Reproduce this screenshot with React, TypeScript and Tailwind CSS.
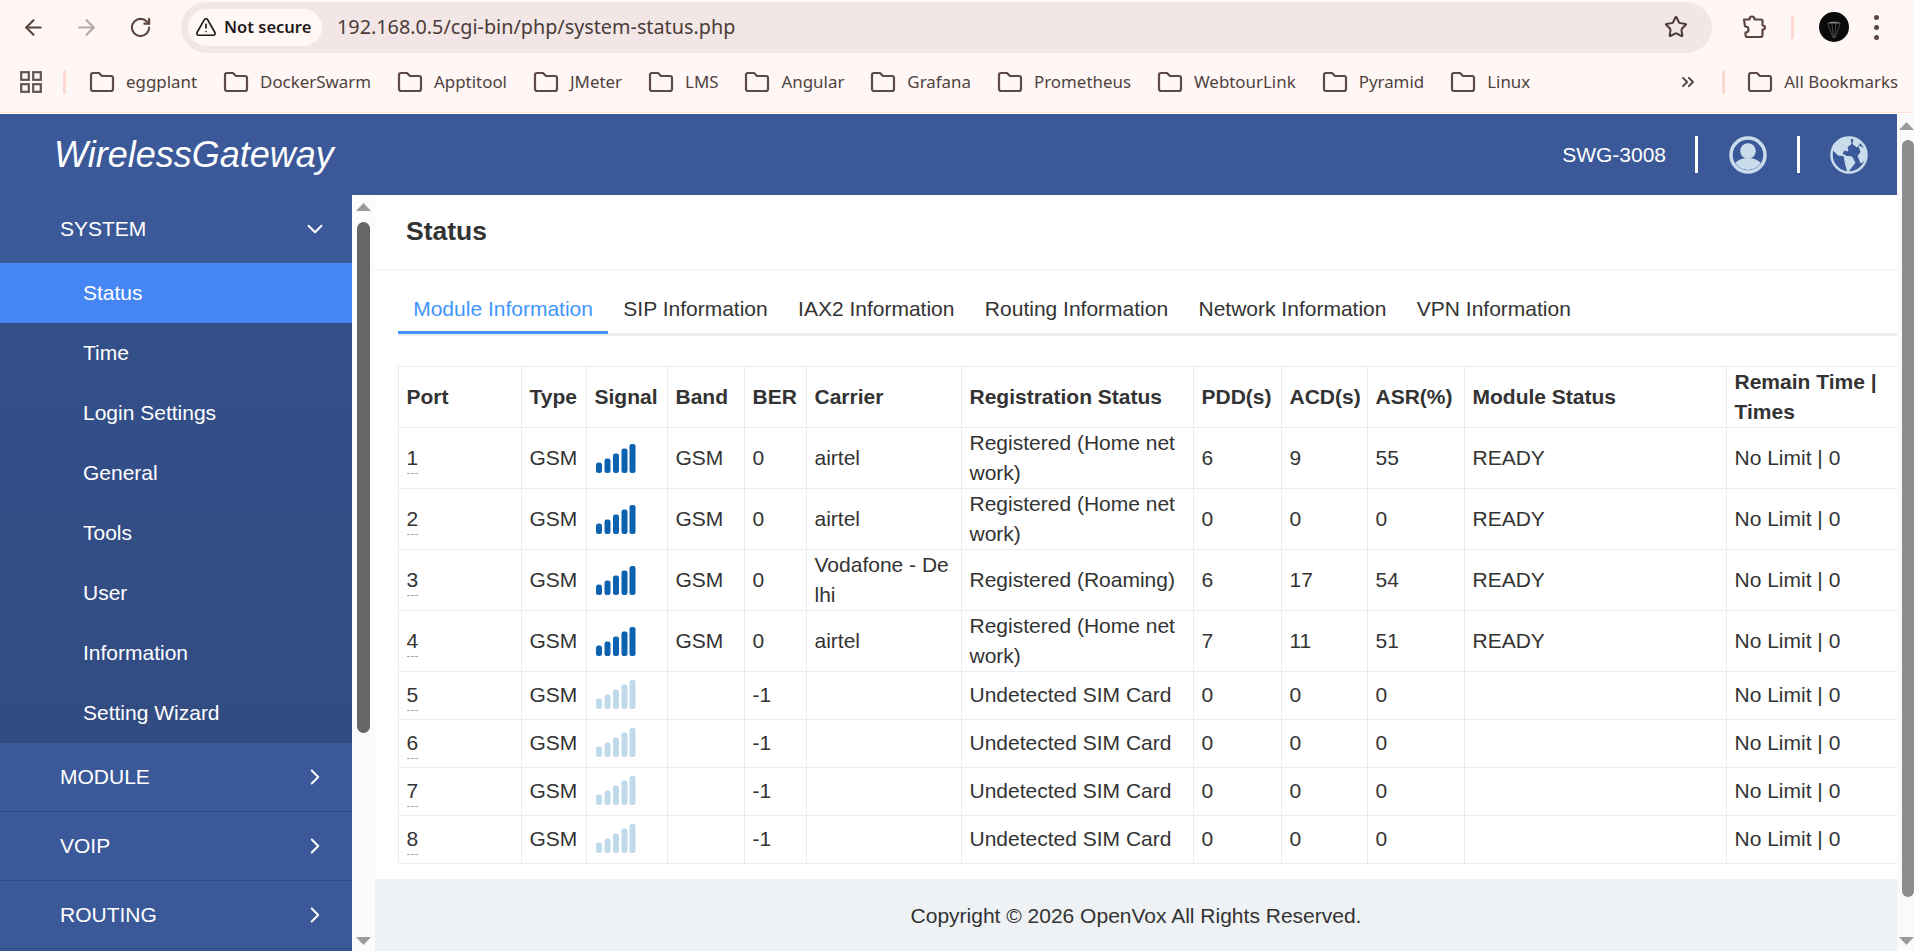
import { ArrowLeft, ArrowRight, RotateCw, Star, ChevronDown, ChevronRight, ChevronsRight, TriangleAlert } from 'lucide-react';

const BOOKMARKS = ['eggplant', 'DockerSwarm', 'Apptitool', 'JMeter', 'LMS', 'Angular', 'Grafana', 'Prometheus', 'WebtourLink', 'Pyramid', 'Linux'];
const SUB_MENU = ['Status', 'Time', 'Login Settings', 'General', 'Tools', 'User', 'Information', 'Setting Wizard'];
const TABS = ['Module Information', 'SIP Information', 'IAX2 Information', 'Routing Information', 'Network Information', 'VPN Information'];

const HOME = 'Registered (Home net work)';
const ROWS = [
  { port: 1, band: 'GSM', ber: '0', carrier: 'airtel', reg: HOME, pdd: 6, acd: 9, asr: 55, status: 'READY' },
  { port: 2, band: 'GSM', ber: '0', carrier: 'airtel', reg: HOME, pdd: 0, acd: 0, asr: 0, status: 'READY' },
  { port: 3, band: 'GSM', ber: '0', carrier: 'Vodafone - Delhi', reg: 'Registered (Roaming)', pdd: 6, acd: 17, asr: 54, status: 'READY' },
  { port: 4, band: 'GSM', ber: '0', carrier: 'airtel', reg: HOME, pdd: 7, acd: 11, asr: 51, status: 'READY' },
  { port: 5, band: '', ber: '-1', carrier: '', reg: 'Undetected SIM Card', pdd: 0, acd: 0, asr: 0, status: '' },
  { port: 6, band: '', ber: '-1', carrier: '', reg: 'Undetected SIM Card', pdd: 0, acd: 0, asr: 0, status: '' },
  { port: 7, band: '', ber: '-1', carrier: '', reg: 'Undetected SIM Card', pdd: 0, acd: 0, asr: 0, status: '' },
  { port: 8, band: '', ber: '-1', carrier: '', reg: 'Undetected SIM Card', pdd: 0, acd: 0, asr: 0, status: '' }
];

const FolderIcon = () => (
  <svg width="26" height="22" viewBox="0 0 26 22" fill="none" stroke="#5b4a45" strokeWidth="2.2" strokeLinejoin="round" className="shrink-0">
    <path d="M2 4a2 2 0 0 1 2-2h6l3 3h9a2 2 0 0 1 2 2v11a2 2 0 0 1-2 2H4a2 2 0 0 1-2-2z" />
  </svg>
);

const AppsIcon = () => (
  <svg width="22" height="22" viewBox="0 0 22 22" fill="none" stroke="#5f5552" strokeWidth="2.2">
    <rect x="1.2" y="1.2" width="7.6" height="7.6" />
    <rect x="13.2" y="1.2" width="7.6" height="7.6" />
    <rect x="1.2" y="13.2" width="7.6" height="7.6" />
    <rect x="13.2" y="13.2" width="7.6" height="7.6" />
  </svg>
);

// chrome's extensions button
const ExtensionIcon = () => (
  <svg width="26" height="26" viewBox="0 0 26 26" fill="none" stroke="#5b4640" strokeWidth="2.200" strokeLinejoin="round">
    <path d="M3 5.500h5.500c0-1.500 1-3 2.500-3s2.500 1.500 2.500 3H20a1.500 1.500 0 0 1 1.500 1.500v4.500c1.800 0 2.500 1 2.500 2s-.7 2-2.500 2V21a2 2 0 0 1-2 2h-13a2 2 0 0 1-2-2v-2.500c1.800 0 3-1.200 3-3s-1.200-3-3-3l-.5-.2z" />
  </svg>
);

const Avatar = () => (
  <svg width="30" height="30" viewBox="0 0 30 30">
    <circle cx="15" cy="15" r="15" fill="#0a0a0a" />
    <path d="M8 11.500c2-2.500 12-2.500 14 0z" fill="#8a8a8a" />
    <path d="M9 12l5 14M13 12l1.500 14M17 12l-1.500 14M21 12l-5 14" stroke="#555" strokeWidth="0.8" fill="none" />
  </svg>
);

const Signal = ({ on }: { on: boolean }) => (
  <svg width="41" height="29" viewBox="0 0 41 29" className="block ml-[1px]" fill={on ? '#0a62b0' : '#bfdaea'}>
    <rect x="0" y="18.5" width="6" height="10.5" rx="2.5" />
    <rect x="8.500" y="14.5" width="6" height="14.5" rx="2.2" />
    <rect x="17" y="9.5" width="6" height="19.5" rx="2.2" />
    <rect x="25.500" y="4.5" width="6" height="24.5" rx="2.2" />
    <rect x="33.500" y="0" width="6" height="29" rx="2.2" />
  </svg>
);

const UserIcon = () => (
  <svg width="38" height="38" viewBox="0 0 38 38">
    <defs>
      <clipPath id="user-clip"><circle cx="19" cy="19" r="15" /></clipPath>
    </defs>
    <circle cx="19" cy="19" r="17" fill="none" stroke="#c8dcec" strokeWidth="3.500" />
    <g fill="#c8dcec" clipPath="url(#user-clip)">
      <circle cx="19" cy="15" r="7.800" />
      <path d="M3 36c0-9 7-14 16-14s16 5 16 14z" />
    </g>
  </svg>
);

const GlobeIcon = () => (
  <svg width="38" height="38" viewBox="0 0 38 38">
    <circle cx="19" cy="19" r="17.500" fill="#3b5998" stroke="#c8dcec" strokeWidth="2.500" />
    <g fill="#c8dcec" stroke="#c8dcec" strokeWidth="1" strokeLinejoin="round">
      <path d="M13 3l7-1 1 6-4 3 1 4-4-1-2 4 4 2-8-1-5-5 1-6z" />
      <path d="M14 20l8 1 3 6-5 6-2 3-2-6z" />
      <path d="M29 10l6 3 1 10-5 4-3-7 3-4z" />
      <path d="M24 3l7 3-4 5-4-3z" />
    </g>
  </svg>
);

const ArrowUp = () => (
  <svg width="15" height="8" viewBox="0 0 15 8" className="block shrink-0" fill="#9a9a9a"><path d="M7.500 0 15 8H0z" /></svg>
);

const ArrowDown = () => (
  <svg width="15" height="8" viewBox="0 0 15 8" className="block shrink-0" fill="#9a9a9a"><path d="M0 0h15L7.500 8z" /></svg>
);

const SideHead = ({ label, tall, open }: { label: string; tall?: boolean; open?: boolean }) => (
  <div className={`flex items-center justify-between pl-[60px] pr-[24px] text-[21px] text-white ${open ? 'h-[68px]' : 'border-b border-[#304b80]'} ${tall ? 'h-[69px]' : open ? '' : 'h-[68px]'}`}>
    <span>{label}</span>
    {open ? <ChevronDown className="w-[26px] h-[26px]" strokeWidth={1.8} /> : <ChevronRight className="w-[26px] h-[26px]" strokeWidth={1.8} />}
  </div>
);

export default function App() {
  const thead = 'border border-[#e9ecf3] px-[7.500px] align-middle text-left font-bold leading-[30px]';
  const td = 'border border-[#e9ecf3] px-[7.500px] align-middle leading-[30px] break-all';

  return (
    <div className="w-[1914px] h-[951px] overflow-hidden flex flex-col bg-white text-[#333] font-['Liberation_Sans',Arial,sans-serif]">
      {/* browser toolbar */}
      <div className="h-[54px] shrink-0 bg-[#fff7f5] flex items-center text-[#5b4640]">
        <div className="w-[181px] shrink-0 flex items-center pl-[21px] gap-[28px]">
          <ArrowLeft className="w-[25px] h-[25px]" strokeWidth={2} />
          <ArrowRight className="w-[25px] h-[25px] text-[#b5a9a6]" strokeWidth={2} />
          <RotateCw className="w-[23px] h-[23px] ml-[2px]" strokeWidth={2.2} />
        </div>
        <div className="w-[1531px] h-[51px] rounded-full bg-[#f2e7e6] flex items-center pl-[7px] pr-[24px]">
          <div className="h-[37px] w-[134px] rounded-full bg-[#fff8f6] flex items-center pl-[7px] gap-[7px] text-[#1f1a1a] font-['Noto_Sans',sans-serif] font-semibold text-[16.500px]">
            <TriangleAlert className="w-[22px] h-[22px] shrink-0" strokeWidth={1.8} />
            <span className="whitespace-nowrap">Not secure</span>
          </div>
          <span className="ml-[15px] text-[19.800px] text-[#4b3b37] font-['Noto_Sans',sans-serif]">192.168.0.5/cgi-bin/php/system-status.php</span>
          <Star className="ml-auto w-[24px] h-[24px] text-[#4b3b37]" strokeWidth={2} />
        </div>
        <div className="ml-[29px]"><ExtensionIcon /></div>
        <div className="ml-[24px] w-[3px] h-[24px] rounded-full bg-[#fbd9d0]" />
        <div className="ml-[25px]"><Avatar /></div>
        <div className="ml-[25px] flex flex-col gap-[5px]">
          <div className="w-[5px] h-[5px] rounded-full bg-[#5b4640]" />
          <div className="w-[5px] h-[5px] rounded-full bg-[#5b4640]" />
          <div className="w-[5px] h-[5px] rounded-full bg-[#5b4640]" />
        </div>
      </div>

      {/* bookmarks bar */}
      <div className="h-[59px] shrink-0 bg-[#fff7f5] border-b border-[#fbe3da] flex items-center pl-[20px] pb-[2px] text-[#4f423e] text-[16.900px] font-['Noto_Sans',sans-serif]">
        <AppsIcon />
        <div className="ml-[21px] w-[3px] h-[24px] rounded-full bg-[#fbd9d0]" />
        <div className="ml-[23px] flex items-center gap-[26px]">
          {BOOKMARKS.map((name) => (
            <div key={name} className="flex items-center gap-[11px] whitespace-nowrap">
              <FolderIcon />
              <span>{name}</span>
            </div>
          ))}
        </div>
        <ChevronsRight className="ml-auto w-[20px] h-[20px]" strokeWidth={2.2} />
        <div className="ml-[24px] w-[3px] h-[24px] rounded-full bg-[#fbd9d0]" />
        <div className="ml-[22px] mr-[16px] flex items-center gap-[11px] whitespace-nowrap">
          <FolderIcon />
          <span>All Bookmarks</span>
        </div>
      </div>
      <div className="h-px shrink-0 bg-white" />

      <div className="flex-1 min-h-0 flex">
        <div className="flex-1 min-w-0 flex flex-col">
          {/* header */}
          <div className="h-[81px] shrink-0 bg-[#3b5998] flex items-center pl-[54px] text-white">
            <span className="italic text-[36px]">WirelessGateway</span>
            <span className="ml-auto text-[21px]">SWG-3008</span>
            <div className="ml-[29px] w-[3px] h-[37px] bg-white" />
            <div className="ml-[31px]"><UserIcon /></div>
            <div className="ml-[30px] w-[3px] h-[37px] bg-white" />
            <div className="ml-[30px] mr-[29px]"><GlobeIcon /></div>
          </div>

          <div className="flex-1 min-h-0 flex">
            {/* sidebar */}
            <div className="w-[352px] shrink-0 bg-[#3b5998] overflow-hidden">
              <SideHead label="SYSTEM" open />
              <div className="bg-gradient-to-b from-[#34508a] to-[#324c82]">
                {SUB_MENU.map((item) => (
                  <div key={item} className={`h-[60px] flex items-center pl-[83px] text-[21px] text-white ${item === 'Status' ? 'bg-[#4585f4]' : ''}`}>
                    {item}
                  </div>
                ))}
              </div>
              <SideHead label="MODULE" tall />
              <SideHead label="VOIP" tall />
              <SideHead label="ROUTING" />
            </div>

            {/* inner scrollbar */}
            <div className="w-[23px] shrink-0 bg-[#fbfbfb] flex flex-col items-center pt-[8px] pb-[6px]">
              <ArrowUp />
              <div className="mt-[11px] w-[13px] h-[511px] rounded-full bg-[#666]" />
              <div className="mt-auto"><ArrowDown /></div>
            </div>

            {/* content */}
            <div className="flex-1 min-w-0 flex flex-col">
              <div className="h-[75px] shrink-0 border-b border-[#eef0f3] flex items-center pl-[31px] pb-[1px] text-[26.500px] font-bold text-[#333]">Status</div>

              <div className="ml-[23px] mt-[13px] h-[53px] shrink-0 border-b-[3px] border-[#eeeeee] flex items-start text-[21px] leading-[52px]">
                {TABS.map((tab, i) => (
                  <div
                    key={tab}
                    className={`h-[51px] px-[15.200px] whitespace-nowrap ${i === 0 ? 'border-b-[3px] border-[#4096ff] text-[#4096ff] rounded-b-[1px]' : 'text-[#333]'}`}
                  >
                    {tab}
                  </div>
                ))}
              </div>

              <div className="ml-[23px] mt-[30px] shrink-0">
                <table className="w-full table-fixed border-collapse text-[21px] text-[#333]">
                  <thead>
                    <tr className="h-[61px]">
                      <th className={`${thead} w-[123px]`}>Port</th>
                      <th className={`${thead} w-[65px]`}>Type</th>
                      <th className={`${thead} w-[81px]`}>Signal</th>
                      <th className={`${thead} w-[77px]`}>Band</th>
                      <th className={`${thead} w-[62px]`}>BER</th>
                      <th className={`${thead} w-[155px]`}>Carrier</th>
                      <th className={`${thead} w-[232px]`}>Registration Status</th>
                      <th className={`${thead} w-[88px]`}>PDD(s)</th>
                      <th className={`${thead} w-[86px]`}>ACD(s)</th>
                      <th className={`${thead} w-[97px]`}>ASR(%)</th>
                      <th className={`${thead} w-[262px]`}>Module Status</th>
                      <th className={`${thead} w-[171px]`}>Remain Time | Times</th>
                    </tr>
                  </thead>
                  <tbody>
                    {ROWS.map((row) => {
                      const cell = row.port < 5 ? td : `${td} pb-[2px]`;
                      return (
                        <tr key={row.port} className={row.port < 5 ? 'h-[61px]' : 'h-[48px]'}>
                          <td className={cell}>
                            <span className="inline-block border-b border-dashed border-[#aaa] leading-[31px]">{row.port}</span>
                          </td>
                          <td className={cell}>GSM</td>
                          <td className={cell}><Signal on={row.port < 5} /></td>
                          <td className={cell}>{row.band}</td>
                          <td className={cell}>{row.ber}</td>
                          <td className={`${cell} pr-[12px]`}>{row.carrier}</td>
                          <td className={cell}>{row.reg}</td>
                          <td className={cell}>{row.pdd}</td>
                          <td className={cell}>{row.acd}</td>
                          <td className={cell}>{row.asr}</td>
                          <td className={cell}>{row.status}</td>
                          <td className={cell}>No Limit | 0</td>
                        </tr>
                      );
                    })}
                  </tbody>
                </table>
              </div>

              <div className="mt-[15px] flex-1 min-h-0 bg-[#eef2f5] flex items-center justify-center pt-[1px] text-[21px] text-[#333]">
                Copyright © 2026 OpenVox All Rights Reserved.
              </div>
            </div>
          </div>
        </div>

        {/* page scrollbar */}
        <div className="w-[17px] shrink-0 bg-[#fafafa] flex flex-col items-end pt-[8px] pb-[6px]">
          <ArrowUp />
          <div className="mt-[10px] w-[12px] h-[757px] rounded-full bg-[#8c8c8c]" />
          <div className="mt-auto"><ArrowDown /></div>
        </div>
      </div>
    </div>
  );
}
